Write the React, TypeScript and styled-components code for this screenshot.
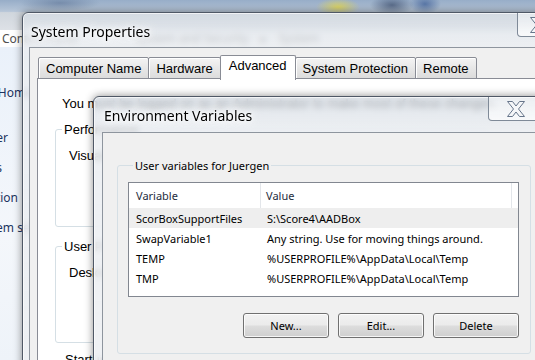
import styled, { createGlobalStyle } from "styled-components";

const GlobalStyle = createGlobalStyle`
  html, body { margin: 0; padding: 0; background: #ffffff; }
  #root { width: 535px; height: 360px; }
`;

const Desktop = styled.div`
  position: relative;
  width: 535px;
  height: 360px;
  overflow: hidden;
  font-family: "Noto Sans", "DejaVu Sans", sans-serif;
`;

/* explorer window in the back */
const Explorer = styled.div`
  position: absolute;
  inset: 0;
  display: flex;
  flex-direction: column;
  background: #ffffff;
`;

const ExplorerGlass = styled.div`
  height: 30px;
  flex: none;
  background:
    radial-gradient(ellipse 22px 9px at 338px 7px, rgba(226, 214, 84, 0.85), transparent),
    radial-gradient(ellipse 22px 10px at 392px 5px, rgba(40, 58, 92, 0.6), transparent),
    radial-gradient(ellipse 16px 10px at 425px 4px, rgba(58, 92, 150, 0.7), transparent),
    radial-gradient(ellipse 40px 8px at 60px 3px, rgba(80, 104, 140, 0.5), transparent),
    linear-gradient(180deg, #97adc8 0%, #b7c6d8 38%, #d0d6dd 42%, #dde1e6 100%);
`;

const CrumbBar = styled.div`
  height: 17px;
  flex: none;
  display: flex;
  align-items: center;
  gap: 12px;
  padding-left: 2px;
  background: #ffffff;
  font-size: 12px;
  color: #505050;
  white-space: nowrap;
`;

const Crumb = styled.span<{ $wide?: boolean }>`
  margin-right: ${(p) => (p.$wide ? 45 : 0)}px;
`;

const ExplorerBody = styled.div`
  flex: 1;
  display: flex;
`;

const NavPane = styled.div`
  width: 260px;
  margin-left: -200px;
  padding-top: 36px;
  display: flex;
  flex-direction: column;
  background: linear-gradient(180deg, #eaf1fa, #f4f7fb 60%, #eef3f9);
`;

const NavList = styled.div`
  display: flex;
  flex-direction: column;
  gap: 10px;
  margin-top: 25px;
`;

const NavLink = styled.div<{ $end: number }>`
  width: ${(p) => 200 + p.$end}px;
  height: 20px;
  line-height: 20px;
  text-align: right;
  font-size: 12px;
  color: #1c3460;
  white-space: nowrap;
`;

/* shared window chrome */
const Window = styled.div<{ $left: number; $top: number; $width: number; $height: number; $pad: number }>`
  position: absolute;
  left: ${(p) => p.$left}px;
  top: ${(p) => p.$top}px;
  width: ${(p) => p.$width}px;
  height: ${(p) => p.$height}px;
  box-sizing: border-box;
  display: flex;
  flex-direction: column;
  padding: 0 ${(p) => p.$pad}px ${(p) => p.$pad}px;
  border: 1px solid #4f5866;
  border-radius: 6px 6px 0 0;
  background: linear-gradient(180deg, rgba(212, 219, 227, 0.72), rgba(233, 236, 240, 0.8) 36px, rgba(238, 240, 243, 0.9));
  backdrop-filter: blur(3px);
  box-shadow: 0 0 9px rgba(0, 0, 0, 0.45), inset 0 0 0 1px rgba(255, 255, 255, 0.65);
`;

const TitleBar = styled.div<{ $height: number }>`
  height: ${(p) => p.$height}px;
  flex: none;
  display: flex;
  align-items: flex-start;
`;

const Title = styled.div<{ $offset: number }>`
  align-self: center;
  padding: ${(p) => p.$offset}px 0 0 2px;
  font-size: 14px;
  color: #000000;
  text-shadow: 0 0 4px #ffffff, 0 0 8px #ffffff, 0 0 12px #ffffff;
`;

const CloseButton = styled.div<{ $width: number }>`
  margin-left: auto;
  width: ${(p) => p.$width}px;
  height: 24px;
  box-sizing: border-box;
  display: flex;
  align-items: center;
  justify-content: center;
  border: 1px solid #7f8a98;
  border-top: none;
  border-radius: 0 0 4px 4px;
  background: linear-gradient(180deg, rgba(255, 255, 255, 0.35), rgba(255, 255, 255, 0.7));
`;

const Client = styled.div`
  flex: 1;
  display: flex;
  flex-direction: column;
  border: 1px solid #8e959e;
  background: #f0f0f0;
`;

/* system properties */
const SysClient = styled(Client)`
  padding: 7px 0 0 7px;
`;

const TabStrip = styled.div`
  display: flex;
  align-items: flex-end;
  height: 24px;
  padding-left: 2px;
  position: relative;
  z-index: 1;
`;

const Tab = styled.div<{ $active?: boolean }>`
  height: ${(p) => (p.$active ? 25 : 22)}px;
  margin-bottom: ${(p) => (p.$active ? -1 : 0)}px;
  margin-left: -1px;
  box-sizing: border-box;
  display: flex;
  align-items: ${(p) => (p.$active ? "flex-start" : "center")};
  padding: ${(p) => (p.$active ? "2px 8px 0" : "0 7px")};
  border: 1px solid #898c95;
  border-bottom: ${(p) => (p.$active ? "none" : "1px solid #898c95")};
  border-radius: 2px 2px 0 0;
  background: ${(p) => (p.$active ? "#ffffff" : "linear-gradient(180deg, #f4f4f4, #e6e6e6 55%, #dcdcdc)")};
  box-shadow: ${(p) => (p.$active ? "none" : "inset 1px 1px 0 #ffffff")};
  font-family: "Liberation Sans", Arial, sans-serif;
  font-size: 13px;
  color: #000000;
  white-space: nowrap;
`;

const TabPage = styled.div`
  flex: 1;
  margin-top: -1px;
  display: flex;
  flex-direction: column;
  padding: 17px 0 0 17px;
  border: 1px solid #898c95;
  background: #ffffff;
  font-family: "Liberation Sans", Arial, sans-serif;
  font-size: 13px;
  color: #000000;
  white-space: nowrap;
`;

const Note = styled.div`
  padding-left: 7px;
  line-height: 16px;
`;

const PageGroup = styled.fieldset<{ $height: number; $gap: number }>`
  margin: ${(p) => p.$gap}px 0 0;
  padding: 0;
  width: 420px;
  height: ${(p) => p.$height}px;
  box-sizing: border-box;
  border: 1px solid #d5dfe5;
  border-radius: 3px;
`;

const PageLegend = styled.legend`
  margin-left: 6px;
  padding: 0 2px;
  line-height: 15px;
`;

const GroupText = styled.div`
  margin-top: 11px;
  padding-left: 13px;
  line-height: 16px;
`;

const LooseLegend = styled.div`
  margin: 9px 0 0 10px;
  line-height: 15px;
`;

/* environment variables */
const EnvClient = styled(Client)`
  padding: 25px 12px 0 14px;
`;

const EnvGroup = styled.fieldset`
  margin: 0;
  padding: 0 11px 15px 10px;
  display: flex;
  flex-direction: column;
  border: 1px solid #d5dfe5;
  border-radius: 3px;
`;

const EnvLegend = styled.legend`
  margin-left: 5px;
  padding: 0 2px;
  font-size: 11px;
  line-height: 15px;
  color: #000000;
`;

const ListBox = styled.div`
  margin-top: 9px;
  height: 115px;
  box-sizing: border-box;
  border: 1px solid #828790;
  background: #ffffff;
  font-size: 11px;
  color: #000000;
`;

const HeaderRow = styled.div`
  display: flex;
  height: 25px;
  align-items: stretch;
  color: #1e2b3c;
`;

const Row = styled.div<{ $selected?: boolean }>`
  display: flex;
  height: 20px;
  align-items: center;
  background: ${(p) => (p.$selected ? "#eeeeee" : "transparent")};
`;

const NameCell = styled.div<{ $head?: boolean }>`
  width: 132px;
  flex: none;
  box-sizing: border-box;
  padding-left: 7px;
  display: flex;
  align-items: center;
  border-right: ${(p) => (p.$head ? "1px solid #e3e6ea" : "none")};
`;

const ValueCell = styled.div<{ $head?: boolean }>`
  flex: 1;
  padding-left: ${(p) => (p.$head ? 5 : 6)}px;
  display: flex;
  align-items: center;
  white-space: nowrap;
`;

const HeadEnd = styled.div`
  width: 6px;
  border-left: 1px solid #e3e6ea;
`;

const ButtonRow = styled.div`
  margin-top: 16px;
  display: flex;
  justify-content: flex-end;
  gap: 9px;
`;

const Button = styled.button`
  width: 86px;
  height: 25px;
  padding: 0;
  border: 1px solid #707070;
  border-radius: 3px;
  background: linear-gradient(180deg, #f2f2f2 0%, #ebebeb 48%, #dddddd 52%, #cfcfcf 100%);
  box-shadow: inset 0 0 0 1px rgba(255, 255, 255, 0.8);
  font-family: "Noto Sans", "DejaVu Sans", sans-serif;
  font-size: 11px;
  color: #000000;
`;

const CloseGlyph = () => (
  <svg width="18" height="16" viewBox="0 0 18 16">
    <polygon
      points="0.5,0.5 5.5,0.5 9,5 12.5,0.5 17.5,0.5 11.5,8 17.5,15.5 12.5,15.5 9,11 5.5,15.5 0.5,15.5 6.5,8"
      fill="#f5f6f8"
      stroke="#66758a"
      strokeWidth="1"
      strokeLinejoin="round"
    />
  </svg>
);

const variables = [
  { name: "ScorBoxSupportFiles", value: "S:\\Score4\\AADBox" },
  { name: "SwapVariable1", value: "Any string. Use for moving things around." },
  { name: "TEMP", value: "%USERPROFILE%\\AppData\\Local\\Temp" },
  { name: "TMP", value: "%USERPROFILE%\\AppData\\Local\\Temp" },
];

export default function App() {
  return (
    <>
      <GlobalStyle />
      <Desktop>
        <Explorer>
          <ExplorerGlass />
          <CrumbBar>
            <Crumb $wide>Control Panel</Crumb>
            <Crumb>System and Security</Crumb>
            <Crumb>▸</Crumb>
            <Crumb>System</Crumb>
          </CrumbBar>
          <ExplorerBody>
            <NavPane>
              <NavLink $end={32}>Control Panel Home</NavLink>
              <NavList>
                <NavLink $end={8}>Device Manager</NavLink>
                <NavLink $end={2}>Remote settings</NavLink>
                <NavLink $end={18}>System protection</NavLink>
                <NavLink $end={62}>Advanced system settings</NavLink>
              </NavList>
            </NavPane>
          </ExplorerBody>
        </Explorer>

        <Window $left={22} $top={12} $width={545} $height={420} $pad={6}>
          <TitleBar $height={34}>
            <Title $offset={2}>System Properties</Title>
            <CloseButton $width={43}>
              <CloseGlyph />
            </CloseButton>
          </TitleBar>
          <SysClient>
            <TabStrip>
              <Tab>Computer Name</Tab>
              <Tab>Hardware</Tab>
              <Tab $active>Advanced</Tab>
              <Tab>System Protection</Tab>
              <Tab>Remote</Tab>
            </TabStrip>
            <TabPage>
              <Note>You must be logged on as an Administrator to make most of these changes.</Note>
              <PageGroup $height={105} $gap={10}>
                <PageLegend>Performance</PageLegend>
                <GroupText>Visual effects, processor scheduling, memory usage, and virtual memory</GroupText>
              </PageGroup>
              <PageGroup $height={104} $gap={12}>
                <PageLegend>User Profiles</PageLegend>
                <GroupText>Desktop settings related to your sign-in</GroupText>
              </PageGroup>
              <LooseLegend>Startup and Recovery</LooseLegend>
            </TabPage>
          </SysClient>
        </Window>

        <Window $left={93} $top={96} $width={460} $height={320} $pad={8}>
          <TitleBar $height={35}>
            <Title $offset={1}>Environment Variables</Title>
            <CloseButton $width={56}>
              <CloseGlyph />
            </CloseButton>
          </TitleBar>
          <EnvClient>
            <EnvGroup>
              <EnvLegend>User variables for Juergen</EnvLegend>
              <ListBox>
                <HeaderRow>
                  <NameCell $head>Variable</NameCell>
                  <ValueCell $head>Value</ValueCell>
                  <HeadEnd />
                </HeaderRow>
                {variables.map((v, i) => (
                  <Row key={v.name} $selected={i === 0}>
                    <NameCell>{v.name}</NameCell>
                    <ValueCell>{v.value}</ValueCell>
                  </Row>
                ))}
              </ListBox>
              <ButtonRow>
                <Button>New...</Button>
                <Button>Edit...</Button>
                <Button>Delete</Button>
              </ButtonRow>
            </EnvGroup>
          </EnvClient>
        </Window>
      </Desktop>
    </>
  );
}
